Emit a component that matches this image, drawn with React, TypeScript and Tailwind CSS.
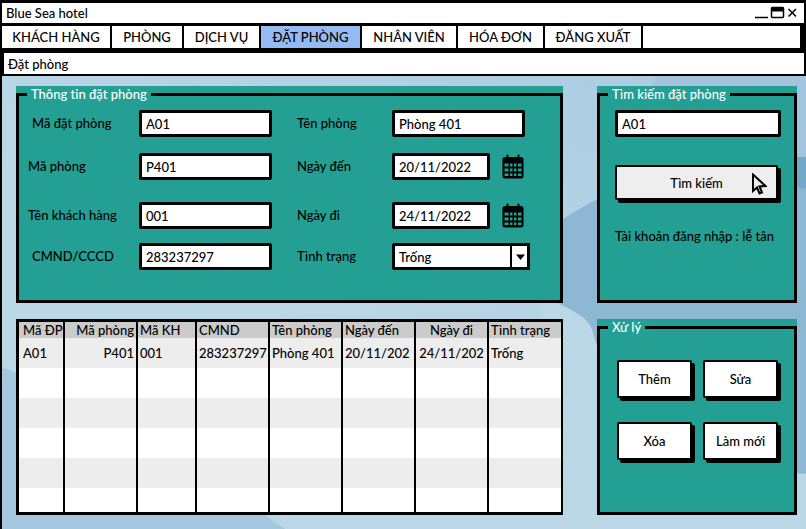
import { ReactNode } from "react";

function Backdrop() {
  return (
    <svg
      className="absolute inset-0 -z-10 h-full w-full"
      viewBox="0 0 806 453"
      preserveAspectRatio="none"
      aria-hidden="true"
    >
      <defs>
        <linearGradient id="sky" x1="0" y1="1" x2="1" y2="0">
          <stop offset="0.4" stopColor="#bbd8e6" />
          <stop offset="1" stopColor="#a9cae2" />
        </linearGradient>
      </defs>
      <rect width="806" height="453" fill="url(#sky)" />
      <path d="M656 0H806V110L620 70Z" fill="#a2c4de" />
      <path d="M555 148C600 118 640 100 700 90H806V453H640C600 380 600 260 550 230Z" fill="#8db7d3" />
      <path d="M780 81H806V113C798 112 790 108 780 106Z" fill="#72a8c8" />
      <path d="M0 291C50 310 140 370 220 410C250 425 262 440 284 453H0Z" fill="#a4c8df" />
      <path d="M555 226C576 236 589 243 592 255C610 330 700 390 806 398V453H540V226Z" fill="#bbd8e6" />
    </svg>
  );
}

function Panel({ title, children, className = "" }: { title: string; children: ReactNode; className?: string }) {
  return (
    <section className={`flex bg-[#239f94] ${className}`}>
      <fieldset className="min-w-0 flex-1 border-[3px] border-black">
        <legend className="ml-2 px-1 leading-4 text-white">{title}</legend>
        {children}
      </fieldset>
    </section>
  );
}

const box = "h-[27px] min-w-0 rounded-[2px] border-[3px] border-black bg-white px-1 leading-5 text-black outline-none";

function Field({ id, label, value, indent }: { id: string; label: string; value: string; indent?: boolean }) {
  return (
    <>
      <label htmlFor={id} className={indent ? "pl-1" : ""}>{label}</label>
      <input id={id} defaultValue={value} className={`${box} w-[133px]`} />
    </>
  );
}

function CalendarIcon() {
  return (
    <svg width="22" height="25" viewBox="0 0 22 25" aria-hidden="true">
      <path d="M5.500 1.500V5M16.500 1.500V5" stroke="#000" strokeWidth="2" strokeLinecap="round" />
      <rect x="0.500" y="3" width="21" height="21.500" rx="2.500" fill="#000" />
      <g fill="#239f94">
        <path d="M2.500 9.500h4v3h-4zM8 9.500h2.500v3H8zM12 9.500h2.500v3H12zM16 9.500h3.500v3H16z" />
        <path d="M2.500 14.500h4v3h-4zM8 14.500h2.500v3H8zM12 14.500h2.500v3H12zM16 14.500h3.500v3H16z" />
        <path d="M2.500 19.500h4v2.500h-4zM8 19.500h2.500v2.500H8zM12 19.500h2.500v2.500H12zM16 19.500h3.500v2.500H16z" />
      </g>
    </svg>
  );
}

function DateField({ id, label, value }: { id: string; label: string; value: string }) {
  return (
    <>
      <label htmlFor={id}>{label}</label>
      <div className="flex h-[27px] items-center gap-3">
        <input id={id} defaultValue={value} className={`${box} w-[98px]`} />
        <button type="button" aria-label={`${label}: lịch`}>
          <CalendarIcon />
        </button>
      </div>
    </>
  );
}

function ActionButton({ children, className = "h-[38px] bg-white" }: { children: ReactNode; className?: string }) {
  return (
    <button
      type="button"
      className={`rounded-[2px] border-2 border-black shadow-[3px_3px_0_#000] ${className}`}
    >
      {children}
    </button>
  );
}

const tabs = [
  { name: "KHÁCH HÀNG", width: "w-[110px]" },
  { name: "PHÒNG", width: "w-[72px]" },
  { name: "DỊCH VỤ", width: "w-[77px]" },
  { name: "ĐẶT PHÒNG", width: "w-[101px]", active: true },
  { name: "NHÂN VIÊN", width: "w-[96px]" },
  { name: "HÓA ĐƠN", width: "w-[87px]" },
  { name: "ĐĂNG XUẤT", width: "w-[98px]" },
];

const columns = [
  { head: "Mã ĐP", value: "A01", width: "w-[46px]", align: "text-left" },
  { head: "Mã phòng", value: "P401", width: "w-[73px]", align: "text-right" },
  { head: "Mã KH", value: "001", width: "w-[59px]", align: "text-left" },
  { head: "CMND", value: "283237297", width: "w-[73px]", align: "text-left" },
  { head: "Tên phòng", value: "Phòng 401", width: "w-[73px]", align: "text-left" },
  { head: "Ngày đến", value: "20/11/202", width: "w-[73px]", align: "text-left" },
  { head: "Ngày đi", value: "24/11/202", width: "w-[73px]", align: "text-center" },
  { head: "Tình trạng", value: "Trống", width: "w-[72px]", align: "text-left" },
];

const rows = [0, 1, 2, 3, 4, 5];

export default function App() {
  return (
    <div className="flex min-h-screen flex-col border-l-2 border-black bg-white font-[Lato,'Noto_Sans',sans-serif] text-[13px] leading-4 font-medium text-black [font-variant-ligatures:none]">
      <header className="flex h-[26px] items-center justify-between border-y-[3px] border-r-2 border-black pr-[6px] pl-1">
        <h1 className="font-medium">Blue Sea hotel</h1>
        <svg width="43" height="14" viewBox="0 0 43 14" fill="none" stroke="#000" strokeWidth="1.500" aria-hidden="true">
          <path d="M0 11.500H13M33.500 3L41 10.500M41 3L33.500 10.500" />
          <rect x="16.500" y="1.500" width="12" height="10" rx="1" />
          <path d="M16 3.500H29" strokeWidth="4" />
        </svg>
      </header>

      <nav className="flex h-[25px] border-r-[6px] border-b-[3px] border-black">
        {tabs.map((tab) => (
          <a
            key={tab.name}
            href="#"
            className={`flex items-center justify-center border-r-2 border-black ${tab.width} ${tab.active ? "bg-[#94bbf3]" : ""}`}
          >
            {tab.name}
          </a>
        ))}
      </nav>

      <h2 className="flex h-[25px] items-center border-2 border-black bg-white pl-1 font-medium">Đặt phòng</h2>

      <main className="relative isolate grid flex-1 grid-cols-[1fr_200px] content-start gap-x-[34px] gap-y-4 pt-[10px] pr-[9px] pb-[14px] pl-[14px]">
        <Backdrop />

        <Panel title="Thông tin đặt phòng">
          <div className="grid grid-cols-[111px_158px_95px_1fr] grid-rows-[43px_49px_41px_27px] pt-2 pb-[30px] pl-[9px] [&>label]:leading-[27px]">
            <Field id="booking" label="Mã đặt phòng" value="A01" indent />
            <Field id="roomName" label="Tên phòng" value="Phòng 401" />
            <Field id="room" label="Mã phòng" value="P401" />
            <DateField id="arrive" label="Ngày đến" value="20/11/2022" />
            <Field id="guest" label="Tên khách hàng" value="001" />
            <DateField id="leave" label="Ngày đi" value="24/11/2022" />
            <Field id="idCard" label="CMND/CCCD" value="283237297" indent />
            <label htmlFor="status">Tình trạng</label>
            <div className="relative h-[27px] w-[138px]">
              <select id="status" className={`${box} w-full appearance-none`}>
                <option>Trống</option>
              </select>
              <span className="pointer-events-none absolute inset-y-0 right-0 flex w-5 items-center justify-center border-x-2 border-black">
                <svg width="9" height="6" viewBox="0 0 9 6" aria-hidden="true">
                  <path d="M0 0.500H9L4.500 6Z" />
                </svg>
              </span>
            </div>
          </div>
        </Panel>

        <Panel title="Tìm kiếm đặt phòng">
          <form className="flex flex-col pt-2 pr-[13px] pl-[15px]">
            <input aria-label="Tìm kiếm đặt phòng" defaultValue="A01" className={box} />
            <div className="relative mt-7 mr-[3px] mb-7 grid">
              <ActionButton className="h-[35px] bg-[#eeeeee]">Tìm kiếm</ActionButton>
              <svg className="absolute top-2 right-[11px] h-[22px] w-4" viewBox="0 0 16 22" fill="none" stroke="#000" strokeWidth="2" aria-hidden="true">
                <path d="M2 1.500V18L6 14.500L8.500 20.500L11 19.500L8.500 13.500L14.500 13Z" />
              </svg>
            </div>
            <p className="whitespace-nowrap">Tài khoản đăng nhập : lễ tân</p>
          </form>
        </Panel>

        <table className="w-full table-fixed border-separate border-spacing-0 border-[3px] border-r-2 border-black bg-white">
          <thead>
            <tr className="h-4 bg-[#cbcbcb]">
              {columns.map((column) => (
                <th
                  key={column.head}
                  className={`border-r-2 border-black px-[2px] font-medium whitespace-nowrap first:pl-1 last:border-r-0 ${column.width} ${column.align}`}
                >
                  {column.head}
                </th>
              ))}
            </tr>
          </thead>
          <tbody>
            {rows.map((row) => (
              <tr key={row} className="h-[30px] odd:bg-[#ededed] last:h-6">
                {columns.map((column) => (
                  <td
                    key={column.head}
                    className={`border-r-2 border-black px-[2px] whitespace-nowrap first:pl-1 last:border-r-0 ${column.align}`}
                  >
                    {row === 0 ? column.value : ""}
                  </td>
                ))}
              </tr>
            ))}
          </tbody>
        </table>

        <Panel title="Xử lý">
          <div className="grid grid-cols-2 gap-x-[11px] gap-y-6 pt-[25px] pr-4 pl-[17px]">
            <ActionButton>Thêm</ActionButton>
            <ActionButton>Sửa</ActionButton>
            <ActionButton>Xóa</ActionButton>
            <ActionButton>Làm mới</ActionButton>
          </div>
        </Panel>
      </main>
    </div>
  );
}
